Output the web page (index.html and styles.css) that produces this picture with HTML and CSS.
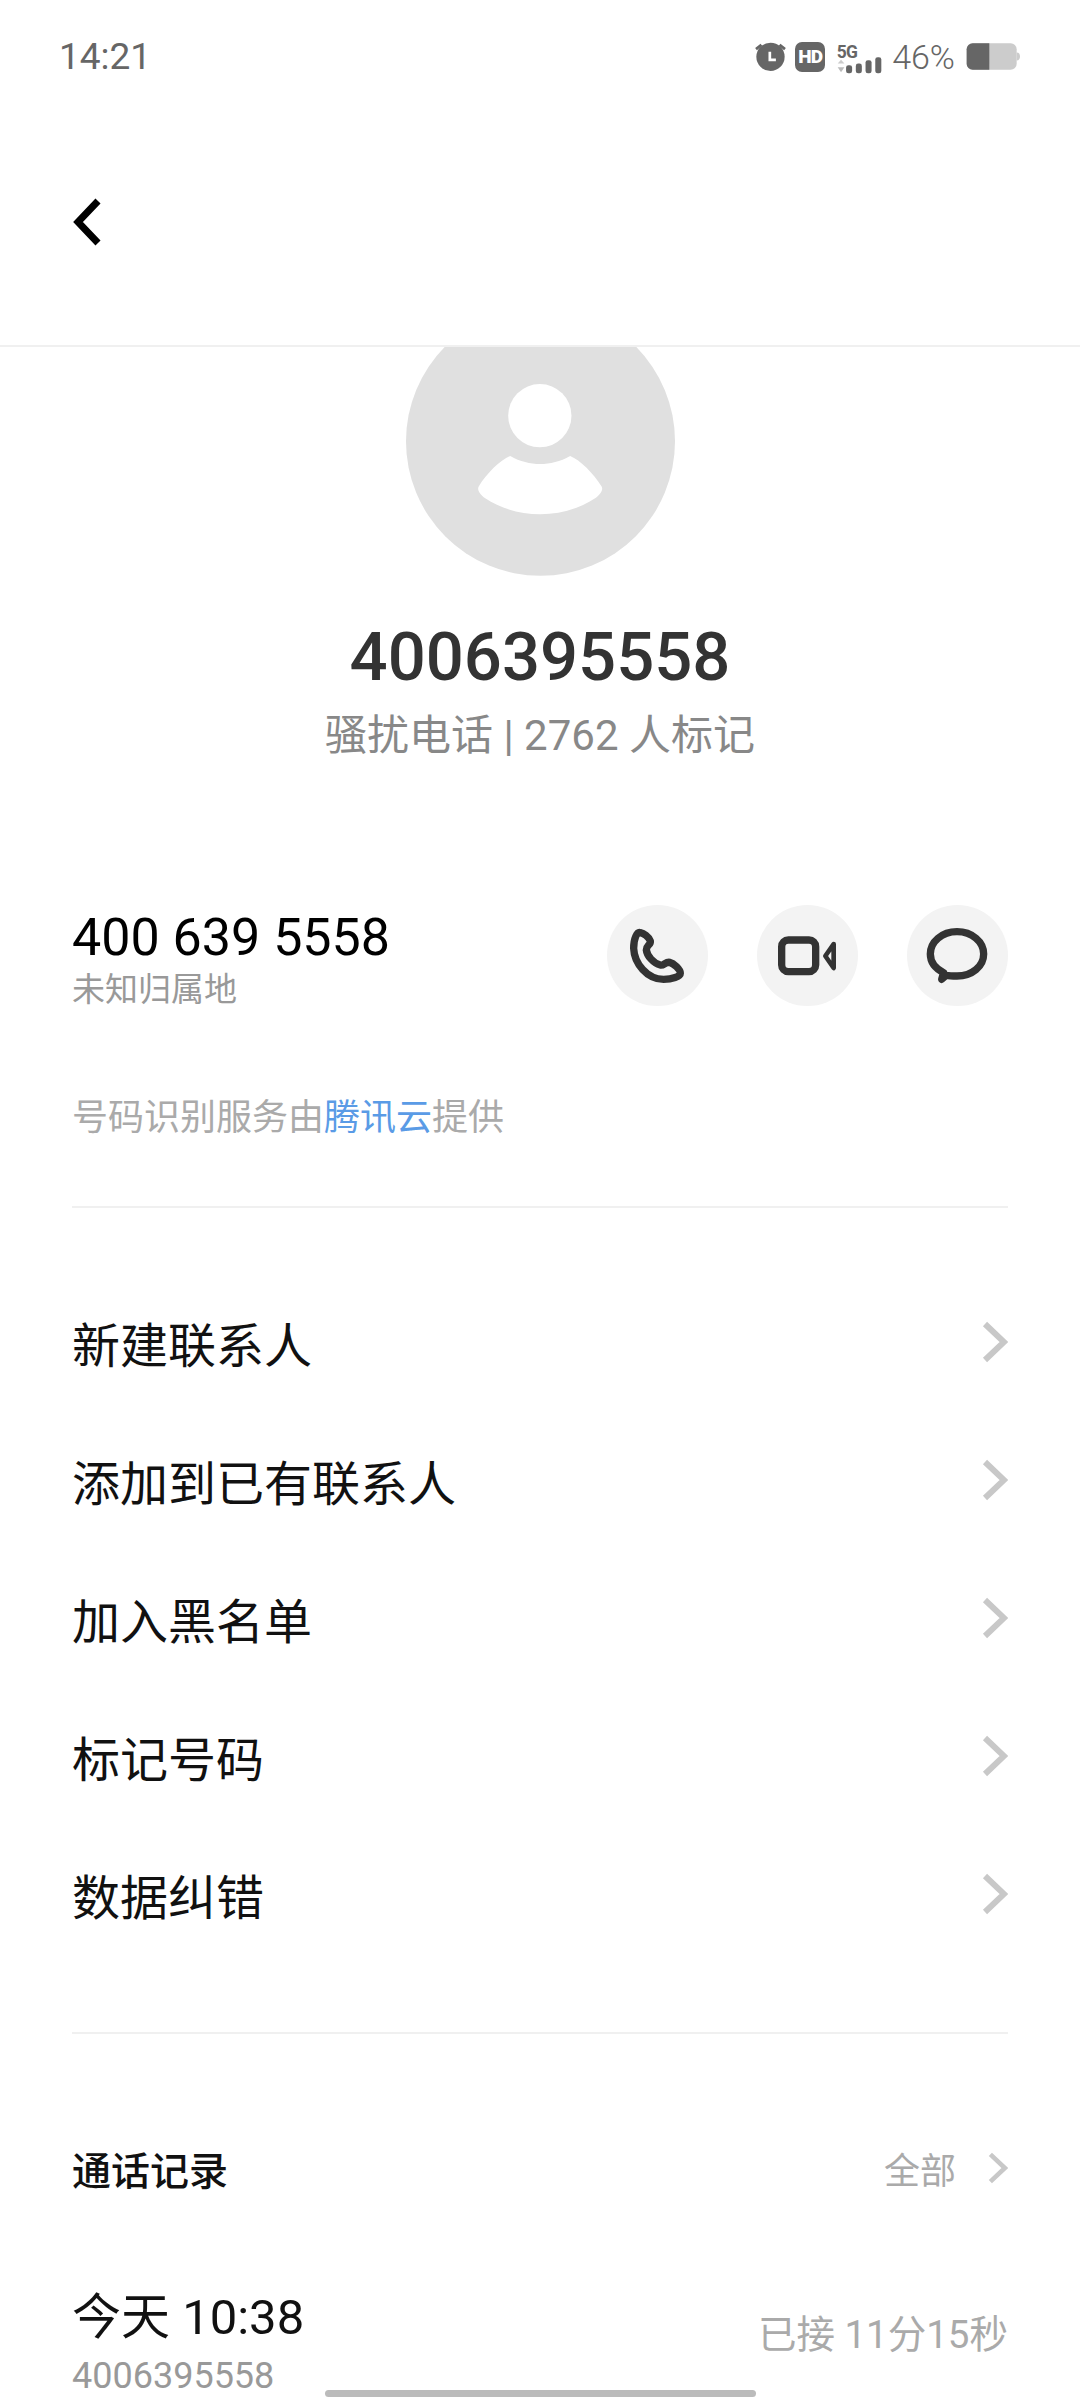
FILE: index.html
```html
<!DOCTYPE html>
<html lang="zh-CN">
<head>
  <meta charset="UTF-8">
  <meta name="viewport" content="width=device-width, initial-scale=1.0">
  <title>4006395558</title>
  <link rel="stylesheet" href="styles.css">
</head>
<body>
  <div class="page">
    <div class="status-bar">
      <span class="time">14:21</span>
      <div class="status-icons">
        <svg class="alarm" viewBox="110 65 92 92">
          <circle cx="156" cy="112" r="42" fill="#666"/>
          <path d="M113 89 129 76M183 76 199 89" stroke="#666" stroke-width="8" fill="none"/>
          <path d="M154 97V121H172" stroke="#fff" stroke-width="8" fill="none"/>
        </svg>
        <span class="hd">HD</span>
        <svg class="signal" viewBox="350 50 140 110">
          <text x="352" y="108" class="signal-label">5G</text>
          <path d="M365 115 375 126H355Z" fill="#ccc"/>
          <path d="M365 152 375 137H355Z" fill="#bbb"/>
          <rect x="380" y="131" width="18" height="24" rx="7" fill="#666"/>
          <rect x="409" y="126" width="18" height="29" rx="7" fill="#666"/>
          <rect x="438" y="116" width="18" height="39" rx="7" fill="#666"/>
          <rect x="467" y="107" width="18" height="48" rx="7" fill="#666"/>
        </svg>
        <span class="battery-text">46%</span>
        <svg class="battery" viewBox="738 72 165 86">
          <rect x="740" y="75" width="150" height="80" rx="18" fill="#ccc"/>
          <path d="M758 75H808V155H758A18 18 0 0 1 740 137V93A18 18 0 0 1 758 75Z" fill="#666"/>
          <path d="M890 103C897 103 900 108 900 115S897 127 890 127Z" fill="#ccc"/>
        </svg>
      </div>
    </div>

    <div class="nav-bar">
      <svg class="back" viewBox="0 0 28 48">
        <path d="M25 3 5 24 25 45" fill="none" stroke="#000" stroke-width="7"/>
      </svg>
    </div>

    <svg class="avatar" viewBox="77 51 808 687">
      <circle cx="481" cy="334" r="404" fill="#e0e0e0"/>
      <circle cx="479" cy="257" r="95" fill="#fff"/>
      <path d="M390 378C420 395 450 402 480 402S540 395 570 378C600 390 640 430 665 470 670 480 660 495 645 505 600 535 540 553 480 553S360 535 315 505C300 495 290 480 295 470 320 430 360 390 390 378Z" fill="#fff"/>
    </svg>

    <h1 class="name">4006395558</h1>
    <p class="tag">骚扰电话 | 2762 人标记</p>

    <div class="contact">
      <div class="contact-info">
        <div class="number">400 639 5558</div>
        <div class="region">未知归属地</div>
      </div>
      <div class="actions">
        <div class="action">
          <svg viewBox="80 75 303 303">
            <path class="action-line" d="M180 158C170 155 160 175 160 205 162 250 200 298 250 298 275 298 300 290 300 280 300 268 280 250 268 247 255 245 250 258 240 255 220 250 200 228 198 210 198 195 212 195 210 183 205 170 190 160 180 158Z"/>
          </svg>
        </div>
        <div class="action">
          <svg viewBox="530 75 303 303">
            <rect class="action-line" x="604" y="180" width="102" height="95" rx="20"/>
            <path class="action-line thin" d="M760 192 735 228 760 264Z"/>
          </svg>
        </div>
        <div class="action">
          <svg viewBox="980 75 303 303">
            <path class="action-line" d="M1090 278C1062 264 1050 242 1050 222 1050 185 1085 155 1130 155S1210 185 1210 222 1175 288 1130 288C1118 288 1108 288 1098 286L1084 298Z"/>
          </svg>
        </div>
      </div>
    </div>

    <p class="credit">号码识别服务由<span class="credit-link">腾讯云</span>提供</p>

    <div class="divider first"></div>

    <ul class="menu">
      <li class="menu-row">新建联系人<svg class="chevron" viewBox="0 0 26 42"><path d="M3 3 22 21 3 39"/></svg></li>
      <li class="menu-row">添加到已有联系人<svg class="chevron" viewBox="0 0 26 42"><path d="M3 3 22 21 3 39"/></svg></li>
      <li class="menu-row">加入黑名单<svg class="chevron" viewBox="0 0 26 42"><path d="M3 3 22 21 3 39"/></svg></li>
      <li class="menu-row">标记号码<svg class="chevron" viewBox="0 0 26 42"><path d="M3 3 22 21 3 39"/></svg></li>
      <li class="menu-row">数据纠错<svg class="chevron" viewBox="0 0 26 42"><path d="M3 3 22 21 3 39"/></svg></li>
    </ul>

    <div class="divider second"></div>

    <div class="log-head">
      <span class="log-title">通话记录</span>
      <span class="log-all">全部<svg class="chevron small" viewBox="0 0 26 42"><path d="M3 3 22 21 3 39"/></svg></span>
    </div>

    <div class="log-row">
      <div>
        <div class="log-time">今天 10:38</div>
        <div class="log-number">4006395558</div>
      </div>
      <div class="log-duration">已接 11分15秒</div>
    </div>

    <div class="home-bar"></div>
  </div>
</body>
</html>
```

FILE: styles.css
```css
* {
  box-sizing: border-box;
}
body {
  margin: 0;
  background: #fff;
  font-family: Roboto, "Noto Sans CJK SC", sans-serif;
}
.page {
  position: relative;
  width: 1080px;
  height: 2400px;
  overflow: hidden;
  background: #fff;
}
h1, p, ul {
  margin: 0;
  padding: 0;
}

/* status bar */
.status-bar {
  height: 113px;
  padding: 0 59px 0 59px;
  display: flex;
  align-items: center;
  justify-content: space-between;
}
.time {
  font-size: 37px;
  color: #666;
}
.status-icons {
  display: flex;
  align-items: center;
  gap: 9px;
}
.alarm {
  width: 31px;
  height: 31px;
}
.hd {
  width: 30px;
  height: 30px;
  border-radius: 7px;
  background: #666;
  color: #fff;
  font-size: 19px;
  font-weight: 900;
  line-height: 30px;
  text-align: center;
  letter-spacing: -1px;
}
.signal {
  width: 47px;
  height: 37px;
  margin-left: 2px;
}
.signal-label {
  font-size: 52px;
  font-weight: 700;
  fill: #666;
  letter-spacing: -2px;
}
.battery-text {
  font-size: 34px;
  font-weight: 300;
  color: #666;
}
.battery {
  width: 55px;
  height: 29px;
  margin-left: 2px;
}

/* nav */
.nav-bar {
  height: 234px;
  padding: 85px 0 0 73px;
  border-bottom: 2px solid #f0f0f0;
}
.back {
  display: block;
  width: 28px;
  height: 48px;
}
.avatar {
  display: block;
  width: 269px;
  height: 229px;
  margin: 0 auto;
}

/* title */
.name {
  margin-top: 41px;
  font-size: 67px;
  font-weight: 500;
  line-height: 80px;
  color: #333;
  text-align: center;
}
.tag {
  margin-top: 11px;
  font-size: 42px;
  line-height: 56px;
  color: #888;
  text-align: center;
}

/* contact row */
.contact {
  margin-top: 141px;
  padding: 0 72px;
  display: flex;
  justify-content: space-between;
}
.number {
  margin-top: 3px;
  font-size: 52px;
  line-height: 60px;
  color: #000;
}
.region {
  font-size: 33px;
  line-height: 44px;
  color: #999;
}
.actions {
  display: flex;
  gap: 49px;
}
.action {
  width: 101px;
  height: 101px;
  border-radius: 50%;
  background: #f3f3f3;
}
.action svg {
  display: block;
  width: 101px;
  height: 101px;
}
.action-line {
  fill: none;
  stroke: #333;
  stroke-width: 22;
  stroke-linejoin: round;
}
.action-line.thin {
  stroke-width: 14;
}
.credit {
  margin-top: 81px;
  padding-left: 72px;
  font-size: 36px;
  line-height: 50px;
  color: #aaa;
}
.credit-link {
  color: #5a9be6;
}
.divider {
  height: 2px;
  margin: 0 72px;
  background: #f0f0f0;
}
.divider.first {
  margin-top: 63px;
}
.divider.second {
  margin-top: 69px;
}

/* menu */
.menu {
  margin-top: 65px;
  list-style: none;
}
.menu-row {
  height: 138px;
  padding: 0 72px;
  display: flex;
  align-items: center;
  justify-content: space-between;
  font-size: 48px;
  color: #111;
}
.chevron {
  width: 26px;
  height: 42px;
}
.chevron path {
  fill: none;
  stroke: #c8c8c8;
  stroke-width: 6;
}
.chevron.small {
  width: 20px;
  height: 32px;
  margin-left: 32px;
}

/* call log */
.log-head {
  height: 60px;
  margin-top: 104px;
  padding: 0 72px;
  display: flex;
  align-items: center;
  justify-content: space-between;
}
.log-title {
  font-size: 39px;
  font-weight: 500;
  color: #111;
}
.log-all {
  display: flex;
  align-items: center;
  font-size: 36px;
  color: #aaa;
}
.log-row {
  margin-top: 90px;
  padding: 0 72px;
  display: flex;
  align-items: flex-start;
  justify-content: space-between;
}
.log-time {
  font-size: 49px;
  line-height: 60px;
  color: #111;
}
.log-number {
  margin-top: 6px;
  font-size: 36px;
  line-height: 44px;
  color: #999;
}
.log-duration {
  margin-top: 22px;
  font-size: 38.5px;
  line-height: 50px;
  color: #aaa;
}
.home-bar {
  position: absolute;
  left: 325px;
  bottom: 3px;
  width: 431px;
  height: 7px;
  border-radius: 4px;
  background: #bbb;
}
```
